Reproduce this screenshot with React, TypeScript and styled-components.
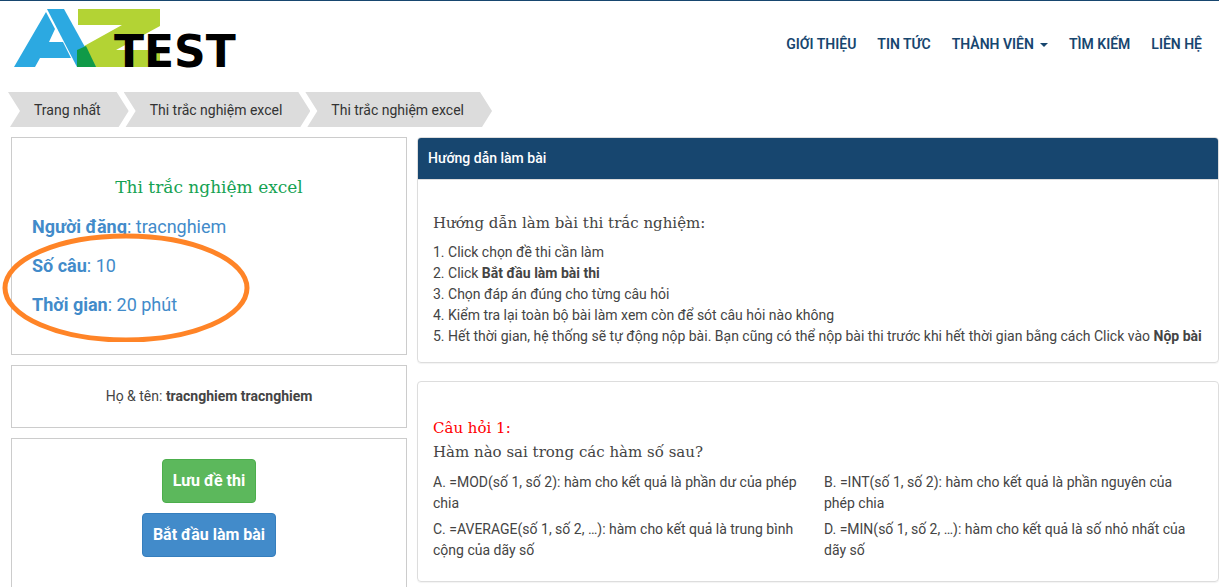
import React from "react";
import styled, { createGlobalStyle } from "styled-components";

const navy = "#17466f";
const slab = '"Roboto Slab", "DejaVu Serif", "Liberation Serif", serif';

const GlobalStyle = createGlobalStyle`
  *, *::before, *::after { box-sizing: border-box; }
  body {
    margin: 0;
    background: #fff;
    color: #444;
    font: 14px/21px Roboto, "Liberation Sans", sans-serif;
    overflow: hidden;
  }
`;

const Page = styled.div`
  border-top: 1px solid ${navy};
`;

const Header = styled.header`
  display: flex;
  justify-content: space-between;
  align-items: flex-start;
  padding: 8px 17px 25px 14px;
`;

const LogoLink = styled.a`
  display: block;
  svg { display: block; overflow: visible; }
`;

const Nav = styled.nav`
  display: flex;
  gap: 21px;
  padding-top: 25px;
`;

const NavLink = styled.a`
  display: flex;
  align-items: center;
  gap: 6px;
  color: ${navy};
  font-weight: 600;
  text-decoration: none;
  text-transform: uppercase;
`;

const Caret = styled.span`
  border: 4px solid transparent;
  border-top-color: ${navy};
  border-bottom: 0;
`;

const Breadcrumb = styled.ol`
  display: flex;
  list-style: none;
  margin: 0 0 10px;
  padding: 0 8px;
`;

const Crumb = styled.li`
  background: #dcdcdc;
  clip-path: polygon(0 0, calc(100% - 12px) 0, 100% 54%, calc(100% - 10px) 100%, 2px 100%, 12px 54%);
  & + & { margin-left: -5px; }
`;

const CrumbLink = styled.a`
  display: block;
  padding: 8px 28px 6px 26px;
  color: #333;
  text-decoration: none;
`;

const Columns = styled.div`
  display: grid;
  grid-template-columns: 396px minmax(0, 1fr);
  gap: 10px;
  padding-left: 11px;
`;

const Sidebar = styled.aside`
  display: flex;
  flex-direction: column;
  gap: 10px;
`;

const Box = styled.section<{ $pad?: string; $center?: boolean }>`
  position: relative;
  border: 1px solid #ccc;
  padding: ${(p) => p.$pad ?? "20px"};
  text-align: ${(p) => (p.$center ? "center" : "left")};
`;

const ActionBox = styled(Box)`
  display: flex;
  flex-direction: column;
  align-items: center;
  gap: 10px;
  padding-bottom: 40px;
`;

const ExamTitle = styled.h1`
  margin: 0;
  color: #14a252;
  font: 400 17px/39px ${slab};
  text-align: center;
`;

const Info = styled.p`
  margin: 0;
  color: #428bca;
  font-size: 18px;
  line-height: 39px;
`;

const Highlight = styled.svg`
  position: absolute;
  left: -10px;
  top: 95px;
`;

const Button = styled.button<{ $bg: string; $edge: string }>`
  padding: 10px;
  border: 1px solid ${(p) => p.$edge};
  border-radius: 4px;
  background: ${(p) => p.$bg};
  color: #fff;
  font: 700 16px/22px Roboto, "Liberation Sans", sans-serif;
`;

const Main = styled.main`
  display: flex;
  flex-direction: column;
  gap: 18px;
`;

const Panel = styled.section`
  border: 1px solid #ddd;
  border-radius: 4px;
  box-shadow: 0 1px 1px rgba(0, 0, 0, 0.05);
  overflow: hidden;
`;

const PanelHeading = styled.h2`
  margin: 0;
  padding: 10px;
  border-bottom: 1px solid #ddd;
  background: ${navy};
  color: #fff;
  font-size: 14px;
  font-weight: 500;
  line-height: 21px;
`;

const PanelBody = styled.div<{ $pad: string }>`
  padding: ${(p) => p.$pad};
`;

const SlabHeading = styled.h3<{ $color?: string }>`
  margin: 0;
  color: ${(p) => p.$color ?? "#444"};
  font: 400 15px/24px ${slab};
`;

const Steps = styled.ol`
  margin: 7px 0 0;
  padding: 0;
  list-style: none;
`;

const Options = styled.div`
  display: grid;
  grid-template-columns: 1fr 1fr;
  gap: 5px 20px;
  margin-top: 8px;
  padding-right: 8px;
`;

const Logo = () => (
  <svg width="300" height="58" viewBox="0 0 300 58" role="img" aria-label="AZ Test">
    <path fill="#b3d334" d="M64 0H146V17L102 41H146V58H63V41L108 16H64Z" />
    <path fill="#2ca9e1" d="M32 3L41 20L35 33H49L57 49L60 58L57 49H26L21 58H0Z" />
    <path fill="#2ca9e1" d="M33 0H50L82 58H63Z" />
    <path fill="#109a48" d="M63 41L72 37L82 58H63Z" />
    <text x="100" y="58" fontFamily="DejaVu Sans, sans-serif" fontWeight="700" fontSize="44">TEST</text>
  </svg>
);

const navItems = [
  { label: "Giới thiệu" },
  { label: "Tin tức" },
  { label: "Thành viên", menu: true },
  { label: "Tìm kiếm" },
  { label: "Liên hệ" },
];

const crumbs = ["Trang nhất", "Thi trắc nghiệm excel", "Thi trắc nghiệm excel"];

const options = [
  "A. =MOD(số 1, số 2): hàm cho kết quả là phần dư của phép chia",
  "B. =INT(số 1, số 2): hàm cho kết quả là phần nguyên của phép chia",
  "C. =AVERAGE(số 1, số 2, …): hàm cho kết quả là trung bình cộng của dãy số",
  "D. =MIN(số 1, số 2, …): hàm cho kết quả là số nhỏ nhất của dãy số",
];

export default function App() {
  return (
    <Page>
      <GlobalStyle />
      <Header>
        <LogoLink href="#"><Logo /></LogoLink>
        <Nav>
          {navItems.map((n) => (
            <NavLink href="#" key={n.label}>
              {n.label}
              {n.menu && <Caret />}
            </NavLink>
          ))}
        </Nav>
      </Header>
      <Breadcrumb>
        {crumbs.map((c, i) => (
          <Crumb key={i}><CrumbLink href="#">{c}</CrumbLink></Crumb>
        ))}
      </Breadcrumb>
      <Columns>
        <Sidebar>
          <Box $pad="30px 20px">
            <ExamTitle>Thi trắc nghiệm excel</ExamTitle>
            <Info><b>Người đăng</b>: tracnghiem</Info>
            <Info><b>Số câu</b>: 10</Info>
            <Info><b>Thời gian</b>: 20 phút</Info>
            <Highlight width="248" height="109" aria-hidden="true">
              <ellipse cx="124" cy="55" rx="121" ry="52" fill="none" stroke="#ff8427" strokeWidth="5" />
            </Highlight>
          </Box>
          <Box $center>Họ &amp; tên: <b>tracnghiem tracnghiem</b></Box>
          <ActionBox>
            <Button type="button" $bg="#5cb85c" $edge="#4cae4c">Lưu đề thi</Button>
            <Button type="button" $bg="#428bca" $edge="#357ebd">Bắt đầu làm bài</Button>
          </ActionBox>
        </Sidebar>
        <Main>
          <Panel>
            <PanelHeading>Hướng dẫn làm bài</PanelHeading>
            <PanelBody $pad="31px 15px 15px">
              <SlabHeading>Hướng dẫn làm bài thi trắc nghiệm:</SlabHeading>
              <Steps>
                <li>1. Click chọn đề thi cần làm</li>
                <li>2. Click <b>Bắt đầu làm bài thi</b></li>
                <li>3. Chọn đáp án đúng cho từng câu hỏi</li>
                <li>4. Kiểm tra lại toàn bộ bài làm xem còn để sót câu hỏi nào không</li>
                <li>5. Hết thời gian, hệ thống sẽ tự động nộp bài. Bạn cũng có thể nộp bài thi trước khi hết thời gian bằng cách Click vào <b>Nộp bài</b></li>
              </Steps>
            </PanelBody>
          </Panel>
          <Panel>
            <PanelBody $pad="34px 15px 20px">
              <SlabHeading $color="#f00">Câu hỏi 1:</SlabHeading>
              <SlabHeading>Hàm nào sai trong các hàm số sau?</SlabHeading>
              <Options>
                {options.map((o) => <div key={o}>{o}</div>)}
              </Options>
            </PanelBody>
          </Panel>
        </Main>
      </Columns>
    </Page>
  );
}
